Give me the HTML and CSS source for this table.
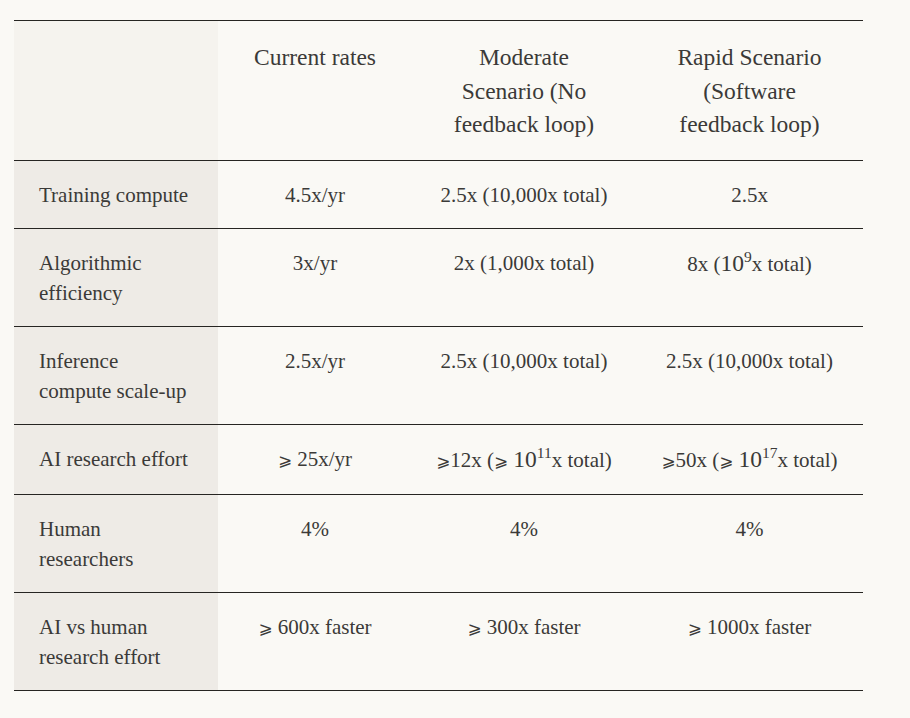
FILE: index.html
```html
<!DOCTYPE html>
<html lang="en">
<head>
<meta charset="utf-8">
<title>Scenarios</title>
<link rel="stylesheet" href="styles.css">
</head>
<body>
<table class="grid">
  <colgroup>
    <col class="c-label">
    <col class="c-cur">
    <col class="c-mod">
    <col class="c-rap">
  </colgroup>
  <thead>
    <tr>
      <th class="label"></th>
      <th>Current rates</th>
      <th>Moderate Scenario (No feedback loop)</th>
      <th>Rapid Scenario (Software feedback loop)</th>
    </tr>
  </thead>
  <tbody>
    <tr>
      <td class="label">Training compute</td>
      <td>4.5x/yr</td>
      <td>2.5x (10,000x total)</td>
      <td>2.5x</td>
    </tr>
    <tr>
      <td class="label">Algorithmic efficiency</td>
      <td>3x/yr</td>
      <td>2x (1,000x total)</td>
      <td class="nw">8x (<span class="m">10<sup>9</sup></span>x total)</td>
    </tr>
    <tr>
      <td class="label">Inference compute scale-up</td>
      <td>2.5x/yr</td>
      <td>2.5x (10,000x total)</td>
      <td>2.5x (10,000x total)</td>
    </tr>
    <tr>
      <td class="label">AI research effort</td>
      <td><span class="ge">⩾</span> 25x/yr</td>
      <td class="nw"><span class="ge">⩾</span>12x (<span class="ge">⩾</span> <span class="m">10<sup>11</sup></span>x total)</td>
      <td class="nw"><span class="ge">⩾</span>50x (<span class="ge">⩾</span> <span class="m">10<sup>17</sup></span>x total)</td>
    </tr>
    <tr>
      <td class="label">Human researchers</td>
      <td>4%</td>
      <td>4%</td>
      <td>4%</td>
    </tr>
    <tr>
      <td class="label">AI vs human research effort</td>
      <td><span class="ge">⩾</span> 600x faster</td>
      <td><span class="ge">⩾</span> 300x faster</td>
      <td><span class="ge">⩾</span> 1000x faster</td>
    </tr>
  </tbody>
</table>
</body>
</html>
```

FILE: styles.css
```css
html, body {
  margin: 0;
  padding: 0;
  background: #faf9f5;
}
body {
  font-family: "Liberation Serif", "Times New Roman", serif;
  color: #3b3a38;
}
.grid {
  margin: 20px 0 0 14px;
  width: 849px;
  border-collapse: collapse;
  table-layout: fixed;
}
.c-label { width: 204px; }
.c-cur { width: 194px; }
.c-mod { width: 224px; }
.c-rap { width: 227px; }
.grid th,
.grid td {
  vertical-align: top;
  text-align: center;
  padding: 19px 25px 18px;
  border-top: 1px solid #262522;
  border-bottom: 1px solid #262522;
}
.grid th {
  font-weight: normal;
  font-size: 23.5px;
  line-height: 33.5px;
  padding-top: 20px;
  padding-bottom: 18px;
}
.grid td {
  font-size: 21px;
  line-height: 30px;
}
.grid td.nw {
  white-space: nowrap;
  padding-left: 10px;
  padding-right: 10px;
}
.grid th.label {
  background: #f5f3ee;
}
.grid td.label {
  background: #eeebe6;
  text-align: left;
  padding-right: 24px;
}
.m {
  font-size: 1.12em;
}
.m sup {
  font-size: 0.66em;
  line-height: 0;
  vertical-align: 0.55em;
}
.ge {
  font-family: "DejaVu Sans", sans-serif;
  font-size: 0.8em;
}
```
